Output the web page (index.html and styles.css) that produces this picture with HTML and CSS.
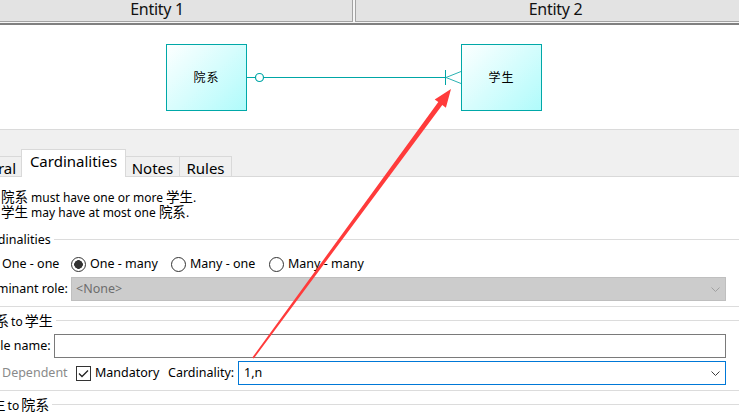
FILE: index.html
```html
<!DOCTYPE html>
<html lang="en">
<head>
<meta charset="utf-8">
<title>Relationship properties</title>
<link rel="stylesheet" href="styles.css">
</head>
<body>
<div class="header">
  <div class="hcell hcell-1">Entity 1</div>
  <div class="hcell hcell-2">Entity 2</div>
</div>
<div class="canvas">
  <svg class="links" width="739" height="104" viewBox="0 0 739 104">
    <line x1="247" y1="52.5" x2="446" y2="52.5" stroke="#00a6a6" stroke-width="1"/>
    <circle cx="259.5" cy="52.5" r="4" fill="#fff" stroke="#00a6a6" stroke-width="1.2"/>
    <line x1="445.5" y1="45" x2="445.5" y2="60" stroke="#00a6a6" stroke-width="1"/>
    <line x1="446" y1="52.5" x2="461" y2="46.5" stroke="#2db3b3" stroke-width="1"/>
    <line x1="446" y1="52.5" x2="461" y2="58.5" stroke="#2db3b3" stroke-width="1"/>
  </svg>
  <div class="entity entity-a">院系</div>
  <div class="entity entity-b">学生</div>
</div>
<div class="tabbar">
  <div class="tab tab-general">General</div>
  <div class="tab tab-active">Cardinalities</div>
  <div class="tab tab-notes">Notes</div>
  <div class="tab tab-rules">Rules</div>
</div>
<div class="panel">
  <div class="desc">
    <div class="dline"><span class="cjk">院系</span> must have one or more <span class="cjk">学生</span>.</div>
    <div class="dline"><span class="cjk">学生</span> may have at most one <span class="cjk">院系</span>.</div>
  </div>
  <div class="group">
    <div class="gtitle gtitle-card"><span>Cardinalities</span></div>
    <div class="radios">
      <label class="opt opt-1"><span class="radio"></span><span>One - one</span></label>
      <label class="opt opt-2"><span class="radio on"></span><span>One - many</span></label>
      <label class="opt opt-3"><span class="radio"></span><span>Many - one</span></label>
      <label class="opt opt-4"><span class="radio"></span><span>Many - many</span></label>
    </div>
    <div class="row">
      <span class="lbl lbl-dom">Dominant role:</span>
      <div class="field select disabled">
        <span class="ftext">&lt;None&gt;</span>
        <svg class="chev" width="9" height="5" viewBox="0 0 9 5"><path d="M0.5 0.5 L4.5 4.5 L8.5 0.5" fill="none" stroke="currentColor" stroke-width="1"/></svg>
      </div>
    </div>
  </div>
  <div class="group">
    <div class="gtitle gtitle-a"><span><span class="cjk">院系</span> to <span class="cjk">学生</span></span></div>
    <div class="row">
      <span class="lbl lbl-role">Role name:</span>
      <div class="field input"></div>
    </div>
    <div class="row row-dep">
      <span class="dep">Dependent</span>
      <span class="check"><svg width="15" height="15" viewBox="0 0 15 15"><rect x="0.5" y="0.5" width="14" height="14" fill="#fff" stroke="#333"/><path d="M3 7.5 L6 10.5 L12 4.5" fill="none" stroke="#222" stroke-width="1.3"/></svg></span>
      <span class="mand">Mandatory</span>
      <span class="card-lbl">Cardinality:</span>
      <div class="field select active">
        <span class="ftext">1,n</span>
        <svg class="chev" width="9" height="5" viewBox="0 0 9 5"><path d="M0.5 0.5 L4.5 4.5 L8.5 0.5" fill="none" stroke="currentColor" stroke-width="1"/></svg>
      </div>
    </div>
  </div>
  <div class="gtitle gtitle-b"><span><span class="cjk">学生</span> to <span class="cjk">院系</span></span></div>
</div>
<svg class="annot" width="739" height="417" viewBox="0 0 739 417">
  <polygon points="451,89 445.9,107.7 442.3,105 253.8,358.5 252.3,357.5 438.3,102 434.7,99.4" fill="#ff3b3b"/>
</svg>
</body>
</html>
```
FILE: styles.css
```css
* { box-sizing: border-box; }
html, body { margin: 0; padding: 0; }
body {
  width: 739px;
  height: 417px;
  overflow: hidden;
  position: relative;
  background: #f0f0f0;
  font-family: "Noto Sans", "Noto Sans CJK SC", sans-serif;
  color: #000;
}
.cjk { font-family: "Noto Sans CJK SC", sans-serif; font-size: 14px; }

/* column header */
.header {
  display: flex;
  gap: 2px;
  height: 25px;
  background: #f6f6f6;
  border-bottom: 2px solid #808080;
}
.hcell {
  flex: none;
  height: 22px;
  background: #e3e3e3;
  border-bottom: 1px solid #a3a3a3;
  font-size: 16px;
  letter-spacing: -0.3px;
  line-height: 19px;
  text-align: center;
  color: #111;
}
.hcell-1 { margin-left: -38px; width: 391px; border-right: 1px solid #a3a3a3; }
.hcell-2 { width: 400px; border-left: 1px solid #a3a3a3; }

/* diagram */
.canvas {
  position: relative;
  height: 105px;
  background: #fff;
  border-bottom: 1px solid #dadada;
}
.links { position: absolute; left: 0; top: 0; }
.entity {
  position: absolute;
  top: 19px;
  width: 81px;
  height: 67px;
  border: 1px solid #00a8a8;
  background: linear-gradient(135deg, #fdffff 0%, #b0fbfb 100%);
  display: flex;
  align-items: center;
  justify-content: center;
  font-family: "Noto Sans CJK SC", sans-serif;
  font-size: 12px;
  letter-spacing: 1px;
  padding-bottom: 2px;
}
.entity-a { left: 166px; }
.entity-b { left: 461px; }

/* tabs */
.tabbar {
  display: flex;
  align-items: flex-end;
  height: 47px;
  border-bottom: 1px solid #d9d9d9;
}
.tab {
  flex: none;
  height: 20px;
  border-top: 1px solid #d9d9d9;
  border-right: 1px solid #d9d9d9;
  padding-top: 2px;
  font-size: 15px;
  line-height: 19px;
  text-align: center;
  white-space: nowrap;
}
.tab-general { margin-left: -44px; width: 65px; border-right: none; }
.tab-active {
  width: 105px;
  height: 28px;
  margin-bottom: -1px;
  background: #fff;
  border-left: 1px solid #d9d9d9;
}
.tab-notes { width: 54px; }
.tab-rules { width: 52px; }

/* content panel */
.panel {
  height: 240px;
  background: #fff;
  overflow: hidden;
  font-size: 12.5px;
}
.desc { padding: 12px 0 0 1px; font-size: 12px; }
.dline { height: 15px; line-height: 15px; white-space: nowrap; }
.dline .cjk { font-size: 13.5px; line-height: 14px; }

.group { border-bottom: 1px solid #dcdcdc; padding-bottom: 5px; }
.gtitle {
  display: flex;
  align-items: center;
  gap: 3px;
  height: 15px;
  line-height: 15px;
  white-space: nowrap;
}
.gtitle::after { content: ""; flex: 1; border-top: 1px solid #dcdcdc; }
.gtitle .cjk { line-height: 15px; }
.gtitle-a, .gtitle-b { font-size: 12px; word-spacing: -1px; }
.gtitle-card { margin-top: 13px; margin-left: -22px; }
.gtitle-a { margin-top: 6px; margin-left: -19px; }
.gtitle-b { margin-top: 6px; margin-left: -22.5px; }

.radios {
  display: flex;
  margin-top: 9px;
  margin-left: -17px;
  height: 16px;
  line-height: 16px;
}
.opt { flex: none; display: flex; align-items: center; gap: 4px; white-space: nowrap; }
.opt-1 { width: 88px; }
.opt-2 { width: 100px; }
.opt-3 { width: 98px; }
.radio {
  flex: none;
  width: 15px;
  height: 15px;
  border: 1px solid #333;
  border-radius: 50%;
  background: #fff;
}
.radio.on { background: radial-gradient(circle closest-side, #333 0 62%, #fff 70%); }

.row {
  display: flex;
  align-items: center;
  height: 24px;
  line-height: 24px;
  margin-right: 13px;
  white-space: nowrap;
}
.lbl { flex: none; }
.lbl-dom { margin-left: -20px; width: 91px; }
.lbl-role { margin-left: -15px; width: 69px; }
.row-dep { margin-top: 3px; }
.group .gtitle + .row { margin-top: 6px; }
.radios + .row { margin-top: 5px; }

.field {
  flex: 1;
  height: 24px;
  display: flex;
  align-items: center;
  justify-content: space-between;
  padding: 0 5px 0 4px;
}
.select.disabled { background: #cccccc; border: 1px solid #bfbfbf; color: #6d6d6d; }
.select.disabled .chev { color: #a0a0a0; }
.input { background: #fff; border: 1px solid #7a7a7a; }
.select.active { background: #fff; border: 1px solid #0078d7; padding-left: 5px; }
.select.active .chev { color: #3c3c3c; }
.chev { flex: none; }

.dep { flex: none; width: 74px; margin-left: 2px; color: #8a8a8a; }
.check { flex: none; width: 19px; height: 15px; display: flex; }
.mand { flex: none; width: 73px; }
.card-lbl { flex: none; width: 70px; }

.annot { position: absolute; left: 0; top: 0; pointer-events: none; }
```
